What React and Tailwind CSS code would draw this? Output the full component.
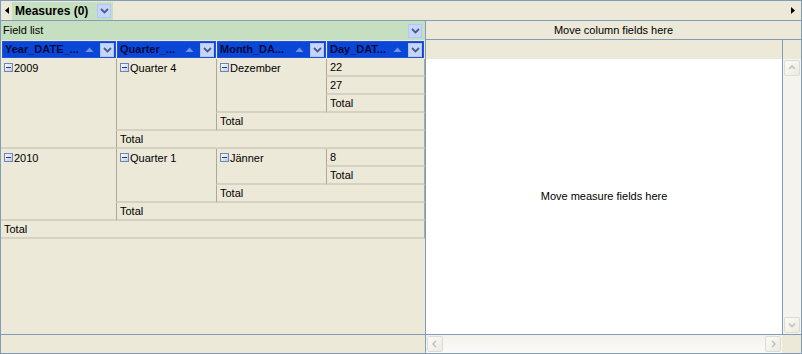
import React from "react";

function Minus() {
  return (
    <svg width="9" height="9" viewBox="0 0 9 9" className="shrink-0 mr-[1px]">
      <defs>
        <linearGradient id="mg" x1="0" y1="0" x2="1" y2="1">
          <stop offset="0" stopColor="#ffffff" />
          <stop offset="1" stopColor="#b9c8e6" />
        </linearGradient>
      </defs>
      <rect x="0.5" y="0.5" width="8" height="8" fill="url(#mg)" stroke="#6f86b4" />
      <line x1="2" y1="4.5" x2="7" y2="4.5" stroke="#1f3b8c" strokeWidth="1" />
    </svg>
  );
}

function DropBtn() {
  return (
    <div className="w-[14px] h-[14px] bg-[#c6d5fb] border border-[#b4c6f3] flex items-center justify-center shrink-0">
      <svg width="9" height="6" viewBox="0 0 9 6">
        <path d="M1 1 L4.5 4.5 L8 1" fill="none" stroke="#4a5d84" strokeWidth="1.8" />
      </svg>
    </div>
  );
}

function SortUp() {
  return (
    <svg width="9" height="5" viewBox="0 0 9 5" className="shrink-0">
      <path d="M4.5 0.5 L8.5 5 L0.5 5 Z" fill="#6f93e6" />
    </svg>
  );
}

function HeaderCell({ label, w }) {
  return (
    <div
      className={`${w} h-[17px] ml-[1px] bg-[#0a47d6] border border-[#1f56dc] flex items-center pl-[2px] pr-[1px]`}
    >
      <span className="font-bold text-[#000a3c] whitespace-nowrap flex-1 leading-none">{label}</span>
      <SortUp />
      <div className="w-[6px]" />
      <DropBtn />
    </div>
  );
}

function ScrollBtn({ dir }) {
  const paths = {
    up: "M2 6 L5 3 L8 6",
    down: "M2 3.5 L5 6.5 L8 3.5",
    left: "M6 2 L3 5 L6 8",
    right: "M4 2 L7 5 L4 8",
  };
  return (
    <div className="w-[16px] h-[16px] rounded-[2px] border border-[#dedcd2] bg-[linear-gradient(135deg,#fbfbf8,#eceae0)] flex items-center justify-center shrink-0">
      <svg width="10" height="10" viewBox="0 0 10 10">
        <path d={paths[dir]} fill="none" stroke="#c3c2b8" strokeWidth="1.6" />
      </svg>
    </div>
  );
}

const cellBase =
  "bg-[#ece9d8] border-b-2 border-b-[#d6d2c2] pl-[3px] leading-[16px] whitespace-nowrap flex items-start";
const sep = "border-l border-l-[#aca899]";
const right = "border-r border-r-[#aca899]";

function Cell({ pos, minus, children, className = "" }) {
  return (
    <div className={`${cellBase} ${pos} ${className}`}>
      {minus ? (
        <span className="flex items-center h-[17px]">
          <Minus />
          <span>{children}</span>
        </span>
      ) : (
        <span className="leading-[17px]">{children}</span>
      )}
    </div>
  );
}

export default function App() {
  return (
    <div className="w-[802px] h-[354px] border border-[#7f9db9] bg-[#ece9d8] flex flex-col text-[11px] text-black font-['Liberation_Sans',Arial,sans-serif] overflow-hidden">
      {/* top bar */}
      <div className="h-[20px] shrink-0 border-b border-[#7f9db9] flex items-center">
        <div className="w-[11px] flex items-center justify-center">
          <svg width="4" height="7" viewBox="0 0 4 7">
            <path d="M4 0 L0 3.5 L4 7 Z" fill="#000" />
          </svg>
        </div>
        <div className="h-[18px] w-[101px] mt-[1px] bg-[#c6dfc1] flex items-center pl-[3px] pr-[2px]">
          <span className="font-bold text-[12px] flex-1 leading-none">Measures (0)</span>
          <DropBtn />
        </div>
        <div className="flex-1" />
        <div className="w-[10px] flex items-center justify-start">
          <svg width="4" height="7" viewBox="0 0 4 7">
            <path d="M0 0 L4 3.5 L0 7 Z" fill="#000" />
          </svg>
        </div>
      </div>

      <div className="flex flex-1 min-h-0">
        {/* left pane */}
        <div className="w-[425px] shrink-0 flex flex-col border-r border-[#7f9db9]">
          <div className="h-[19px] shrink-0 bg-[#c6dfc1] flex items-center pl-[2px] pr-[3px]">
            <span className="flex-1 leading-none">Field list</span>
            <DropBtn />
          </div>
          <div className="h-[19px] shrink-0 flex items-center">
            <HeaderCell label="Year_DATE_..." w="w-[114px]" />
            <HeaderCell label="Quarter_..." w="w-[99px]" />
            <HeaderCell label="Month_DA..." w="w-[109px]" />
            <HeaderCell label="Day_DAT..." w="w-[97px]" />
          </div>
          <div className="grid grid-cols-[115px_100px_110px_99px] grid-rows-[repeat(10,18px)] shrink-0">
            <Cell pos="col-start-1 row-start-1 row-span-5" minus>2009</Cell>
            <Cell pos={`col-start-2 row-start-1 row-span-4 ${sep}`} minus>Quarter 4</Cell>
            <Cell pos={`col-start-3 row-start-1 row-span-3 ${sep}`} minus>Dezember</Cell>
            <Cell pos={`col-start-4 row-start-1 ${sep} ${right}`}>22</Cell>
            <Cell pos={`col-start-4 row-start-2 ${sep} ${right}`}>27</Cell>
            <Cell pos={`col-start-4 row-start-3 ${sep} ${right}`}>Total</Cell>
            <Cell pos={`col-start-3 col-span-2 row-start-4 ${sep} ${right}`}>Total</Cell>
            <Cell pos={`col-start-2 col-span-3 row-start-5 ${sep} ${right}`}>Total</Cell>

            <Cell pos="col-start-1 row-start-6 row-span-4" minus>2010</Cell>
            <Cell pos={`col-start-2 row-start-6 row-span-3 ${sep}`} minus>Quarter 1</Cell>
            <Cell pos={`col-start-3 row-start-6 row-span-2 ${sep}`} minus>Jänner</Cell>
            <Cell pos={`col-start-4 row-start-6 ${sep} ${right}`}>8</Cell>
            <Cell pos={`col-start-4 row-start-7 ${sep} ${right}`}>Total</Cell>
            <Cell pos={`col-start-3 col-span-2 row-start-8 ${sep} ${right}`}>Total</Cell>
            <Cell pos={`col-start-2 col-span-3 row-start-9 ${sep} ${right}`}>Total</Cell>
            <Cell pos={`col-start-1 col-span-4 row-start-10 ${right}`}>Total</Cell>
          </div>
          <div className="flex-1" />
          <div className="h-[19px] shrink-0 border-t border-[#7f9db9]" />
        </div>

        {/* right pane */}
        <div className="flex-1 flex flex-col min-w-0">
          <div className="h-[19px] shrink-0 border-b border-[#7f9db9] flex items-center justify-center">
            <span className="leading-none">Move column fields here</span>
          </div>
          <div className="h-[19px] shrink-0 flex">
            <div className="flex-1" />
            <div className="w-[19px] border-l border-[#7f9db9]" />
          </div>
          <div className="flex-1 flex min-h-0">
            <div className="flex-1 bg-white flex items-center justify-center">
              <span className="leading-none">Move measure fields here</span>
            </div>
            <div className="w-[19px] border-l border-[#7f9db9] bg-[#f4f3ee] flex flex-col items-center justify-between py-[1px]">
              <ScrollBtn dir="up" />
              <ScrollBtn dir="down" />
            </div>
          </div>
          <div className="h-[19px] shrink-0 border-t border-[#7f9db9] flex">
            <div className="flex-1 bg-[linear-gradient(180deg,#f3f2ec,#fbfbf9)] flex items-center justify-between px-[1px]">
              <ScrollBtn dir="left" />
              <ScrollBtn dir="right" />
            </div>
            <div className="w-[19px] bg-[#ece9d8]" />
          </div>
        </div>
      </div>
    </div>
  );
}
